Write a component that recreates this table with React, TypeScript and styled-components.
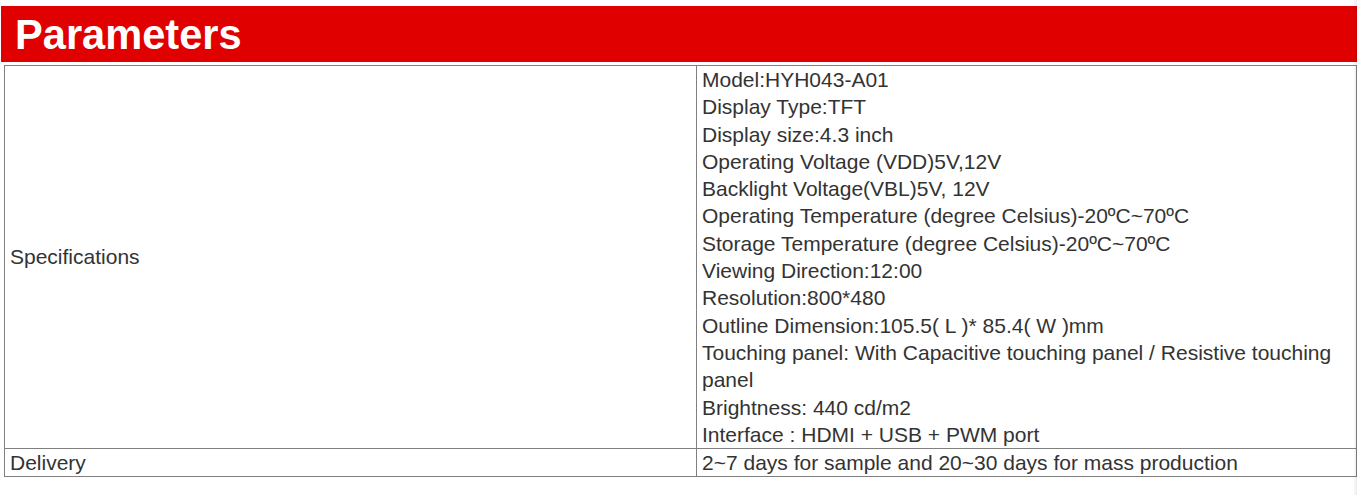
import React from 'react';
import styled, { createGlobalStyle } from 'styled-components';

const GlobalStyle = createGlobalStyle`
    html, body {
        margin: 0;
        padding: 0;
        background: #ffffff;
    }
    body {
        font-family: "Liberation Sans", Arial, sans-serif;
        color: #333333;
    }
`

const Page = styled.div`
    padding-top: 6px;
    width: 1357px;
`
const TitleBar = styled.div`
    margin-left: 1px;
    height: 56px;
    background-color: #e00000;
    display: flex;
    align-items: center;
    padding-left: 14px;
`
const Title = styled.h2`
    margin: 0;
    color: #ffffff;
    font-size: 41.6px;
    font-weight: bold;
    line-height: 1;
    padding-top: 1px;
`
const Table = styled.table`
    margin-top: 3px;
    margin-left: 4px;
    width: 1353px;
    border-collapse: collapse;
    table-layout: fixed;
    font-size: 21px;
    line-height: 27.3px;
    color: #333333;
`
const Cell = styled.td<{ $width?: number }>`
    border: 1px solid #808080;
    padding: 0 5px;
    vertical-align: middle;
    width: ${p => (p.$width ? p.$width + 'px' : 'auto')};
`
const Line = styled.div`
    white-space: normal;
`
const EdgeShade = styled.div`
    position: fixed;
    top: 0;
    right: 0;
    width: 4px;
    height: 100%;
    background: linear-gradient(to right, rgba(0, 0, 0, 0), rgba(0, 0, 0, 0.08));
    pointer-events: none;
`

const specs = [
    'Model:HYH043-A01',
    'Display Type:TFT',
    'Display size:4.3 inch',
    'Operating Voltage (VDD)5V,12V',
    'Backlight Voltage(VBL)5V, 12V',
    'Operating Temperature (degree Celsius)-20ºC~70ºC',
    'Storage Temperature (degree Celsius)-20ºC~70ºC',
    'Viewing Direction:12:00',
    'Resolution:800*480',
    'Outline Dimension:105.5( L )* 85.4( W )mm',
    'Touching panel: With Capacitive touching panel / Resistive touching panel',
    'Brightness: 440 cd/m2',
    'Interface : HDMI + USB + PWM port',
]

const App: React.FC = () => {
    return (
        <Page>
            <GlobalStyle />
            <TitleBar>
                <Title>Parameters</Title>
            </TitleBar>
            <Table>
                <tbody>
                    <tr>
                        <Cell $width={681}>Specifications</Cell>
                        <Cell>
                            {specs.map(s => <Line key={s}>{s}</Line>)}
                        </Cell>
                    </tr>
                    <tr>
                        <Cell>Delivery</Cell>
                        <Cell>2~7 days for sample and 20~30 days for mass production</Cell>
                    </tr>
                </tbody>
            </Table>
            <EdgeShade />
        </Page>
    )
}

export default App;
